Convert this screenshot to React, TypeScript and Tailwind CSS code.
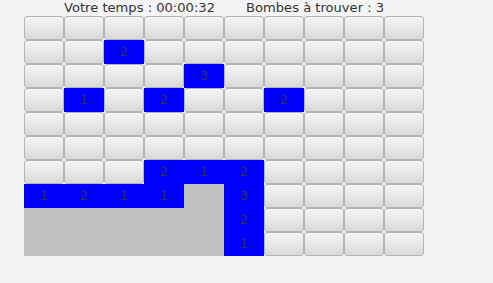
import React from "react";

type Cell = { kind: "hidden" } | { kind: "open"; n?: number };

const H: Cell = { kind: "hidden" };
const G: Cell = { kind: "open" };
const n = (v: number): Cell => ({ kind: "open", n: v });

const board: Cell[][] = [
  [H, H, H, H, H, H, H, H, H, H],
  [H, H, n(2), H, H, H, H, H, H, H],
  [H, H, H, H, n(3), H, H, H, H, H],
  [H, n(1), H, n(2), H, H, n(2), H, H, H],
  [H, H, H, H, H, H, H, H, H, H],
  [H, H, H, H, H, H, H, H, H, H],
  [H, H, H, n(2), n(1), n(2), H, H, H, H],
  [n(1), n(2), n(1), n(1), G, n(3), H, H, H, H],
  [G, G, G, G, G, n(2), H, H, H, H],
  [G, G, G, G, G, n(1), H, H, H, H],
];

function Tile({ cell }: { cell: Cell }) {
  if (cell.kind === "hidden") {
    return (
      <div className="h-[24px] w-[40px] rounded-[3px] border border-[#b3b3b3] bg-gradient-to-b from-[#f6f6f6] to-[#dadada]" />
    );
  }
  if (cell.n === undefined) {
    return <div className="h-[24px] w-[40px] bg-[#c0c0c0]" />;
  }
  return (
    <div className="flex h-[24px] w-[40px] items-center justify-center bg-[#0000ff] text-[13px] text-[#333333]">
      {cell.n}
    </div>
  );
}

export default function App() {
  return (
    <main
      className="h-[283px] w-[493px] bg-[#f4f4f4] text-[#333333]"
      style={{ fontFamily: '"DejaVu Sans", sans-serif' }}
    >
      <div className="flex h-[16px] items-center gap-[31px] pl-[64px] text-[13.1px] leading-none">
        <span>Votre temps : 00:00:32</span>
        <span>Bombes à trouver : 3</span>
      </div>
      <div className="ml-[24px] grid w-[400px] grid-cols-[repeat(10,40px)]">
        {board.map((row, r) =>
          row.map((cell, c) => <Tile key={`${r}-${c}`} cell={cell} />)
        )}
      </div>
    </main>
  );
}
